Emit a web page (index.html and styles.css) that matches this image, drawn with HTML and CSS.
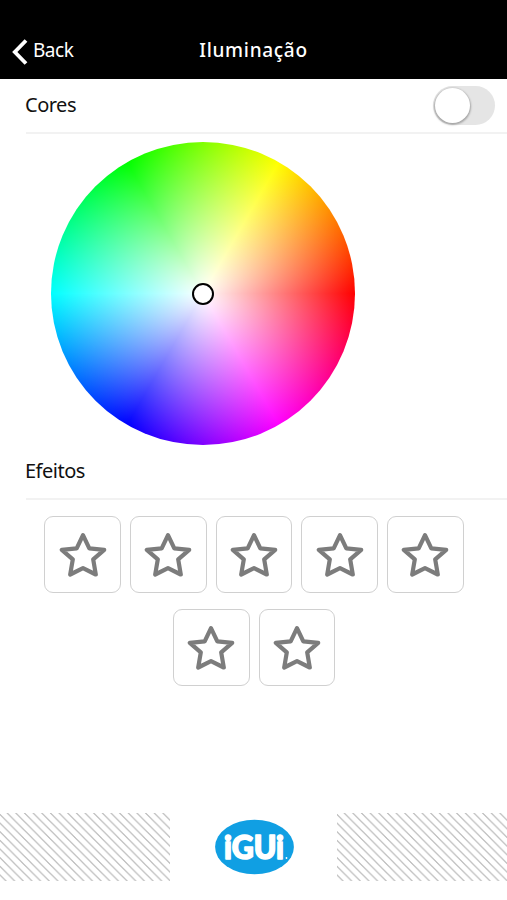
FILE: index.html
```
<!DOCTYPE html>
<html lang="pt-BR">
<head>
    <meta charset="UTF-8">
    <meta name="viewport" content="width=device-width, initial-scale=1.0">
    <title>Iluminação</title>
    <link rel="stylesheet" href="styles.css">
</head>
<body>
    <!-- Shared star icon -->
    <svg class="symbols" width="0" height="0">
        <symbol id="star" viewBox="0 0 48 46">
            <path d="M24 3.2 L30.3 16.4 L45.2 17.8 L34.2 27.3 L36.8 42.5 L24 36.2 L11.2 42.5 L13.8 27.3 L2.8 17.8 L17.7 16.4 Z" />
        </symbol>
    </svg>

    <!-- Top Bar -->
    <header class="header">
        <a class="back">
            <svg class="back-icon" width="16" height="26" viewBox="0 0 16 26"><path d="M14 1.5 L2.8 13 L14 24.5" /></svg>
            <span>Back</span>
        </a>
        <h1>Iluminação</h1>
    </header>

    <main>
        <!-- Colors Section -->
        <div class="section-title">
            <h2>Cores</h2>
            <div class="switch"><div class="knob"></div></div>
        </div>
        <div class="wheel">
            <div class="picker"></div>
        </div>

        <!-- Effects Section -->
        <div class="section-title">
            <h2>Efeitos</h2>
        </div>
        <div class="effects">
            <button><svg><use href="#star" /></svg></button>
            <button><svg><use href="#star" /></svg></button>
            <button><svg><use href="#star" /></svg></button>
            <button><svg><use href="#star" /></svg></button>
            <button><svg><use href="#star" /></svg></button>
            <button><svg><use href="#star" /></svg></button>
            <button><svg><use href="#star" /></svg></button>
        </div>
    </main>

    <!-- Footer -->
    <footer class="footer">
        <svg class="stripes" width="170" height="68">
            <defs>
                <pattern id="lines" width="8.65" height="8.65" patternUnits="userSpaceOnUse">
                    <path d="M-10.15 -8.65 L15.8 17.3 M-1.5 -8.65 L24.45 17.3 M-10.15 0 L7.15 17.3" />
                </pattern>
            </defs>
            <rect width="170" height="68" fill="url(#lines)" />
        </svg>
        <svg class="logo" width="80" height="56" viewBox="0 0 80 56">
            <ellipse cx="40.5" cy="28" rx="39.4" ry="27.2" />
            <text class="logo-text" x="10" y="39.5" textLength="60" lengthAdjust="spacingAndGlyphs">iGUi</text>
            <circle cx="72.5" cy="39" r="0.9" />
        </svg>
        <svg class="stripes" width="170" height="68">
            <rect width="170" height="68" fill="url(#lines)" />
        </svg>
    </footer>
</body>
</html>
```
FILE: styles.css
```
/* General Styles */
body {
    display: flex;
    flex-direction: column;
    height: 900px;
    margin: 0;
    overflow: hidden;
    background: #fff;
    color: #111;
    font-family: "Noto Sans", "Open Sans", sans-serif;
}
h1, h2 {
    margin: 0;
    font-weight: 400;
}
.symbols {
    position: absolute;
}

/* Top Bar */
.header {
    display: grid;
    grid-template-columns: 1fr auto 1fr;
    align-items: center;
    box-sizing: border-box;
    height: 79px;
    padding: 20px 0 0 12px;
    background: #000;
    color: #fff;
}
.header h1 {
    margin-right: 12px;
    font-size: 19px;
    font-weight: 500;
    line-height: 28px;
    letter-spacing: 0.7px;
}
.back {
    display: flex;
    align-items: center;
    gap: 5px;
    font-size: 19px;
    line-height: 28px;
    letter-spacing: -0.5px;
}
.back-icon {
    margin-top: 4px;
    fill: none;
    stroke: #fff;
    stroke-width: 3.8;
}

/* Section Titles */
.section-title {
    display: flex;
    align-items: center;
    justify-content: space-between;
    box-sizing: border-box;
    height: 55px;
    margin-left: 26px;
    padding-right: 12px;
    border-bottom: 2px solid #f2f2f2;
}
.section-title h2 {
    margin: -2px 0 0 -1px;
    font-size: 20px;
    line-height: 28px;
    letter-spacing: -0.5px;
}

/* Switch */
.switch {
    box-sizing: border-box;
    width: 62px;
    height: 39px;
    padding: 2px;
    border-radius: 20px;
    background: #e5e5e5;
}
.knob {
    width: 35px;
    height: 35px;
    border-radius: 50%;
    background: #fff;
    box-shadow: 0 1px 2px 1px rgba(0, 0, 0, 0.28);
}

/* Color Wheel */
.wheel {
    display: flex;
    align-items: center;
    justify-content: center;
    width: 304px;
    height: 303px;
    margin: 8px 0 0 51px;
    border-radius: 50%;
    background:
        radial-gradient(closest-side, #fff, rgba(255, 255, 255, 0)),
        conic-gradient(from 90deg, #f00, #f0f, #00f, #0ff, #0f0, #ff0, #f00);
}
.picker {
    width: 18px;
    height: 18px;
    border: 2.4px solid #000;
    border-radius: 50%;
    background: #fff;
}

/* Effects */
.effects {
    display: flex;
    flex-wrap: wrap;
    justify-content: center;
    gap: 16px 9px;
    padding: 16px 36px 16px 37px;
}
.effects button {
    display: flex;
    align-items: center;
    justify-content: center;
    box-sizing: border-box;
    width: 76.7px;
    height: 77px;
    padding: 0;
    border: 1.5px solid #d0d0d0;
    border-radius: 9px;
    background: #fff;
}
.effects svg {
    width: 48px;
    height: 46px;
    fill: none;
    stroke: #7c7c7c;
    stroke-width: 4.2;
    stroke-linejoin: round;
}

/* Footer */
.footer {
    display: flex;
    align-items: center;
    justify-content: space-between;
    height: 68px;
    margin: auto 0 19px;
}
.stripes path {
    stroke: #aeaeae;
    stroke-width: 1;
}
.logo {
    fill: #109fe3;
}
.logo circle {
    fill: #fff;
}
.logo-text {
    fill: #fff;
    stroke: #fff;
    stroke-width: 1.6;
    stroke-linejoin: round;
    font-family: Lato, "Liberation Sans", sans-serif;
    font-size: 32px;
    font-weight: 900;
}
```
